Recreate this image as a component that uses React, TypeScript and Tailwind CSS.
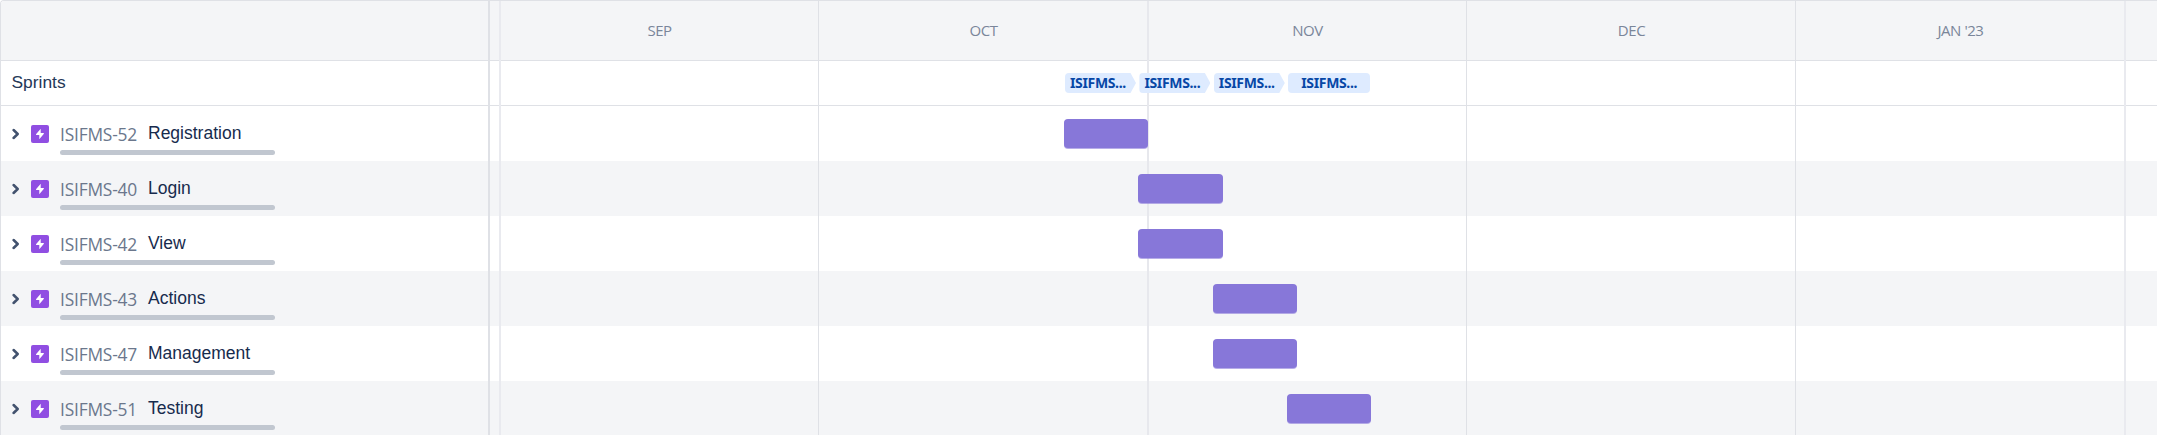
type Epic = { key: string; title: string; start: number };

const epics: Epic[] = [
  { key: "ISIFMS-52", title: "Registration", start: 574 },
  { key: "ISIFMS-40", title: "Login", start: 648.2 },
  { key: "ISIFMS-42", title: "View", start: 648.2 },
  { key: "ISIFMS-43", title: "Actions", start: 722.6 },
  { key: "ISIFMS-47", title: "Management", start: 722.6 },
  { key: "ISIFMS-51", title: "Testing", start: 797 },
];

const months = [
  { label: "", width: "w-[9px]", line: "" },
  { label: "SEP", width: "w-[319px]", line: "border-l-2 border-[#e9eaef]" },
  { label: "OCT", width: "w-[329px]", line: "border-l border-[#dfe1e6]" },
  { label: "NOV", width: "w-[319px]", line: "border-l-2 border-[#e7e8ed]" },
  { label: "DEC", width: "w-[329px]", line: "border-l border-[#dfe1e6]" },
  { label: "JAN '23", width: "w-[329px]", line: "border-l border-[#dfe1e6]" },
  { label: "", width: "w-[33px]", line: "border-l-2 border-[#e9eaef]" },
];

function Chevron() {
  return (
    <svg className="ml-[11px] h-3 w-2 shrink-0" viewBox="0 0 8 12" fill="none">
      <path d="M1.6 2 L5.7 6 L1.6 10" stroke="#42526e" strokeWidth="2.5" strokeLinecap="round" strokeLinejoin="round" />
    </svg>
  );
}

function EpicIcon() {
  return (
    <svg className="ml-[11px] h-[18px] w-[18px] shrink-0" viewBox="0 0 18 18">
      <rect width="18" height="18" rx="2" fill="#904ee2" />
      <path d="M9.7 3.8 L5 9.3 Q4.8 10 5.5 10 H8.3 V14.2 L12.9 8.7 Q13.1 8 12.4 8 H9.7 Z" fill="#fff" />
    </svg>
  );
}

function Sprint({ last = false }: { last?: boolean }) {
  return (
    <div
      className={
        last
          ? "flex h-5 w-[82px] items-center justify-center rounded-[4px] bg-[#deebff]"
          : "mr-[3.4px] flex h-5 w-[71px] items-center rounded-l-[4px] bg-[#deebff] pl-[5px] [clip-path:polygon(0_0,65.5px_0,71px_50%,65.5px_100%,0_100%)]"
      }
    >
      <span className="font-['Noto_Sans',sans-serif] text-[14px] leading-5 font-bold tracking-[-0.35px] text-[#0747a6]">ISIFMS...</span>
    </div>
  );
}

function EpicLabel({ epic }: { epic: Epic }) {
  return (
    <div className="h-[55px] odd:bg-white even:bg-[#f4f5f7]">
      <div className="flex h-11 items-center pt-3">
        <Chevron />
        <EpicIcon />
        <span className="ml-[11px] w-[78px] font-['Open_Sans',sans-serif] text-[17.4px] leading-6 font-normal tracking-[-0.2px] whitespace-nowrap text-[#6b778c]">
          {epic.key}
        </span>
        <span className="ml-[10px] pb-[3px] text-[17.5px] leading-6 text-[#172b4d]">{epic.title}</span>
      </div>
      <div className="ml-[59px] h-[5px] w-[215px] rounded-[2.5px] bg-[#c1c7d0]" />
    </div>
  );
}

export default function App() {
  return (
    <div className="flex h-[435px] w-full overflow-hidden rounded-tl-[4px] border-t border-l border-[#dfe1e6] bg-white font-['Liberation_Sans',sans-serif]">
      <aside className="w-[489px] shrink-0 border-r-2 border-[#dfe1e6]">
        <div className="h-[60px] border-b border-[#dfe1e6] bg-[#f4f5f7]" />
        <div className="flex h-[45px] items-center border-b border-[#dfe1e6] pb-px pl-[10.5px] text-[17.4px] text-[#253858]">Sprints</div>
        <div>
          {epics.map((e) => (
            <EpicLabel key={e.key} epic={e} />
          ))}
        </div>
      </aside>
      <main className="relative min-w-0 flex-1">
        <div className="flex h-[60px] border-b border-[#dfe1e6] bg-[#f4f5f7]">
          {months.map((m, i) => (
            <div
              key={i}
              className={`${m.width} flex shrink-0 items-center justify-center pl-[2px] font-['Open_Sans',sans-serif] text-[15px] font-normal tracking-[-0.45px] text-[#7a869a]`}
            >
              {m.label}
            </div>
          ))}
        </div>
        <div className="flex h-[45px] items-center border-b border-[#dfe1e6] pl-[575px]">
          <div className="relative z-10 flex">
            <Sprint />
            <Sprint />
            <Sprint />
            <Sprint last />
          </div>
        </div>
        <div>
          {epics.map((e) => (
            <div key={e.key} className="h-[55px] pt-[13px] odd:bg-white even:bg-[#f4f5f7]">
              <div
                className="relative z-10 h-[29px] w-[84.4px] rounded-[4px] bg-[#8777d9] shadow-[0_1px_0_#8777d999]"
                style={{ marginLeft: e.start }}
              />
            </div>
          ))}
        </div>
        <div className="pointer-events-none absolute inset-0 flex">
          {months.map((m, i) => (
            <div key={i} className={`${m.width} ${m.line} shrink-0`} />
          ))}
        </div>
      </main>
    </div>
  );
}
